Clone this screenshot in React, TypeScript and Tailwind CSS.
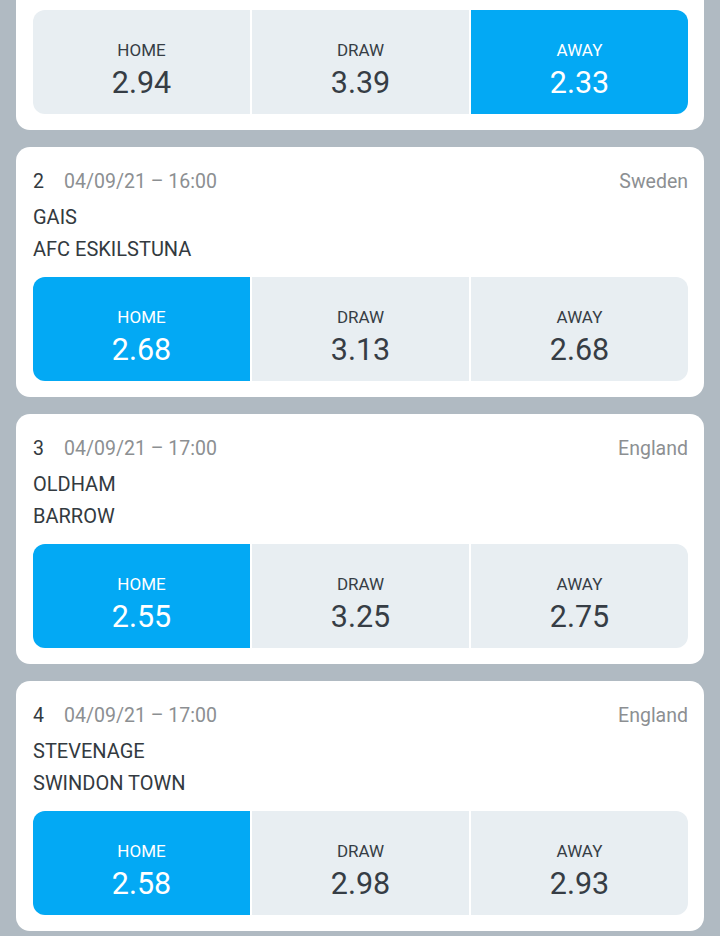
import React from "react";

type Match = {
  n: number;
  date: string;
  country: string;
  home: string;
  away: string;
  odds: [string, string, string];
  sel: number;
};

const matches: Match[] = [
  { n: 1, date: "04/09/21 – 15:00", country: "England", home: "CREWE", away: "BURTON", odds: ["2.94", "3.39", "2.33"], sel: 2 },
  { n: 2, date: "04/09/21 – 16:00", country: "Sweden", home: "GAIS", away: "AFC ESKILSTUNA", odds: ["2.68", "3.13", "2.68"], sel: 0 },
  { n: 3, date: "04/09/21 – 17:00", country: "England", home: "OLDHAM", away: "BARROW", odds: ["2.55", "3.25", "2.75"], sel: 0 },
  { n: 4, date: "04/09/21 – 17:00", country: "England", home: "STEVENAGE", away: "SWINDON TOWN", odds: ["2.58", "2.98", "2.93"], sel: 0 },
];

const labels = ["HOME", "DRAW", "AWAY"];

function Card({ m }: { m: Match }) {
  return (
    <div className="bg-white rounded-[14px] h-[250px] pl-[17px] pr-[16px] pt-[22px] flex flex-col">
      <div className="flex items-center justify-between h-[26px] text-[19.5px] leading-[26px]">
        <div className="flex items-center">
          <span className="text-[#333a40] w-[31px]">{m.n}</span>
          <span className="text-[#8c8f92]">{m.date}</span>
        </div>
        <span className="text-[#8c8f92]">{m.country}</span>
      </div>
      <div className="text-[20px] leading-[32px] text-[#333a40] mt-[6px]">{m.home}</div>
      <div className="text-[20px] leading-[32px] text-[#333a40]">{m.away}</div>
      <div className="mt-[12px] flex gap-[2px] h-[104px]">
        {m.odds.map((o, i) => {
          const active = i === m.sel;
          const round = i === 0 ? "rounded-l-[12px]" : i === 2 ? "rounded-r-[12px]" : "";
          return (
            <div
              key={i}
              className={`flex-1 flex flex-col items-center pt-[29px] ${round} ${active ? "bg-[#03a9f4] text-white" : "bg-[#e8eef2] text-[#363d45]"}`}
            >
              <span className="text-[17px] leading-[22px]">{labels[i]}</span>
              <span className="text-[30.5px] leading-[36px] mt-[4px]">{o}</span>
            </div>
          );
        })}
      </div>
    </div>
  );
}

export default function App() {
  return (
    <div className="w-[720px] h-[936px] overflow-hidden bg-[#b0bac2]" style={{ fontFamily: "Roboto, sans-serif" }}>
      <div className="flex flex-col gap-[17px] px-[16px] mt-[-120px]">
        {matches.map((m) => (
          <Card key={m.n} m={m} />
        ))}
      </div>
    </div>
  );
}
